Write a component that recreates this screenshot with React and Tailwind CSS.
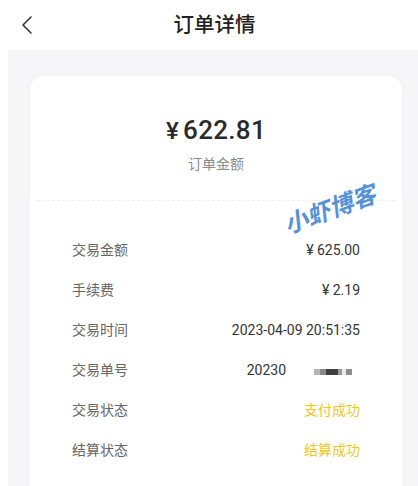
import React from 'react';

const rows = [
  { label: '交易金额', value: '¥ 625.00' },
  { label: '手续费', value: '¥ 2.19' },
  { label: '交易时间', value: '2023-04-09 20:51:35' },
  { label: '交易单号', value: 'order' },
  { label: '交易状态', value: '支付成功', ok: true },
  { label: '结算状态', value: '结算成功', ok: true },
];

const OrderDetail = () => {
  return (
    <div
      className="w-[418px] h-[486px] overflow-hidden bg-white flex flex-col"
      style={{ fontFamily: 'Roboto, "Noto Sans CJK SC", sans-serif' }}
    >
      {/* header */}
      <div className="h-[50px] flex items-center relative shrink-0">
        <svg className="absolute left-[19px] top-[15px]" width="16" height="20" viewBox="0 0 16 20" fill="none">
          <path d="M12 2 L4 10 L12 18" stroke="#333" strokeWidth="1.6" strokeLinecap="round" strokeLinejoin="round" />
        </svg>
        <h1 className="w-full text-center text-[20.5px] text-[#222] font-medium pl-[11px]">订单详情</h1>
      </div>

      {/* body */}
      <div className="ml-[8px] flex-1 bg-[#f6f6f8] pt-[26px] pl-[22px] pr-[16px]">
        <div className="bg-white rounded-t-[14px] h-[124px] flex flex-col items-center shadow-[0_0_6px_rgba(0,0,0,0.03)]">
          <div className="mt-[39px] text-[26px] leading-[30px] text-[#2a2a2a] font-medium tracking-[0.3px]">
            <span className="text-[24px] mr-[4px]">¥</span>622.81
          </div>
          <div className="mt-[8px] text-[14px] text-[#8a8a8a]">订单金额</div>
        </div>

        <div className="relative bg-white h-[300px] pt-[30px]">
          <div className="absolute top-0 left-[7px] right-[7px] border-t border-dashed border-[#eeeeee]" />
          <div className="absolute left-[252px] top-[-5px] leading-[30px] -rotate-[20deg] text-[24px] font-bold italic text-[#5592d8]">
            小虾博客
          </div>
          {rows.map((r) => (
            <div key={r.label} className="h-[40px] flex items-center justify-between pl-[42px] pr-[42px]">
              <span className="text-[14px] text-[#666]">{r.label}</span>
              {r.value === 'order' ? (
                <span className="flex items-center text-[14px] text-[#333] mr-[8px]">
                  20230
                  <span className="ml-[28px] mt-[4px] flex h-[6px]">
                    <span className="w-[6px] bg-[#b5b5b5]" />
                    <span className="w-[6px] bg-[#8a8a8a]" />
                    <span className="w-[12px] bg-[#3f3f3f]" />
                    <span className="w-[4px] bg-[#9a9a9a]" />
                    <span className="w-[4px] bg-[#e8e8e8]" />
                    <span className="w-[6px] bg-[#8c8c8c]" />
                  </span>
                </span>
              ) : (
                <span className={`text-[14px] ${r.ok ? 'text-[#f2c61c]' : 'text-[#333]'}`}>{r.value}</span>
              )}
            </div>
          ))}
        </div>
      </div>
    </div>
  );
};

export default function App() {
  return <OrderDetail />;
}
